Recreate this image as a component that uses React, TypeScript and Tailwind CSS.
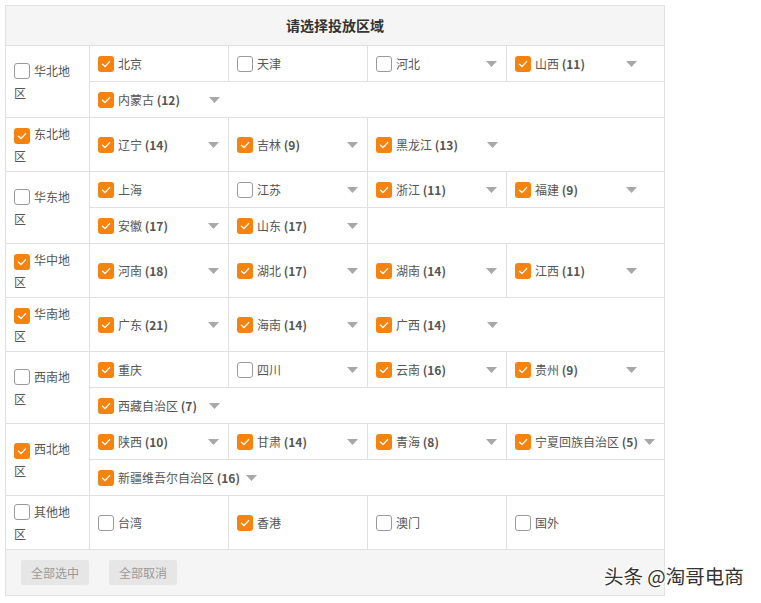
import React from "react";

type Item = { n: string; c?: number; on: boolean; arrow?: boolean; br?: boolean };
type Region = { name: string; on: boolean; rows: Item[][] };

const data: Region[] = [
  {
    name: "华北地区",
    on: false,
    rows: [
      [
        { n: "北京", on: true, br: true },
        { n: "天津", on: false, br: true },
        { n: "河北", on: false, arrow: true, br: true },
        { n: "山西", c: 11, on: true, arrow: true },
      ],
      [{ n: "内蒙古", c: 12, on: true, arrow: true }],
    ],
  },
  {
    name: "东北地区",
    on: true,
    rows: [
      [
        { n: "辽宁", c: 14, on: true, arrow: true, br: true },
        { n: "吉林", c: 9, on: true, arrow: true, br: true },
        { n: "黑龙江", c: 13, on: true, arrow: true },
      ],
    ],
  },
  {
    name: "华东地区",
    on: false,
    rows: [
      [
        { n: "上海", on: true, br: true },
        { n: "江苏", on: false, arrow: true, br: true },
        { n: "浙江", c: 11, on: true, arrow: true, br: true },
        { n: "福建", c: 9, on: true, arrow: true },
      ],
      [
        { n: "安徽", c: 17, on: true, arrow: true, br: true },
        { n: "山东", c: 17, on: true, arrow: true, br: true },
      ],
    ],
  },
  {
    name: "华中地区",
    on: true,
    rows: [
      [
        { n: "河南", c: 18, on: true, arrow: true, br: true },
        { n: "湖北", c: 17, on: true, arrow: true, br: true },
        { n: "湖南", c: 14, on: true, arrow: true, br: true },
        { n: "江西", c: 11, on: true, arrow: true },
      ],
    ],
  },
  {
    name: "华南地区",
    on: true,
    rows: [
      [
        { n: "广东", c: 21, on: true, arrow: true, br: true },
        { n: "海南", c: 14, on: true, arrow: true, br: true },
        { n: "广西", c: 14, on: true, arrow: true },
      ],
    ],
  },
  {
    name: "西南地区",
    on: false,
    rows: [
      [
        { n: "重庆", on: true, br: true },
        { n: "四川", on: false, arrow: true, br: true },
        { n: "云南", c: 16, on: true, arrow: true, br: true },
        { n: "贵州", c: 9, on: true, arrow: true },
      ],
      [{ n: "西藏自治区", c: 7, on: true, arrow: true }],
    ],
  },
  {
    name: "西北地区",
    on: true,
    rows: [
      [
        { n: "陕西", c: 10, on: true, arrow: true, br: true },
        { n: "甘肃", c: 14, on: true, arrow: true, br: true },
        { n: "青海", c: 8, on: true, arrow: true, br: true },
        { n: "宁夏回族自治区", c: 5, on: true, arrow: true },
      ],
      [{ n: "新疆维吾尔自治区", c: 16, on: true, arrow: true }],
    ],
  },
  {
    name: "其他地区",
    on: false,
    rows: [
      [
        { n: "台湾", on: false, br: true },
        { n: "香港", on: true, br: true },
        { n: "澳门", on: false, br: true },
        { n: "国外", on: false },
      ],
    ],
  },
];

function Box({ on }: { on: boolean }) {
  if (on)
    return (
      <span className="inline-flex w-[16px] h-[16px] rounded-[3px] bg-[#f6830f] items-center justify-center shrink-0">
        <svg width="12" height="12" viewBox="0 0 12 12">
          <path d="M2.5 6.2 L5 8.6 L9.6 3.6" fill="none" stroke="#fff" strokeWidth="1.4" strokeLinecap="round" strokeLinejoin="round" />
        </svg>
      </span>
    );
  return <span className="inline-block w-[16px] h-[16px] rounded-[3px] bg-white border border-[#9a9a9a] shrink-0" />;
}

function Arrow() {
  return (
    <svg width="11" height="6" viewBox="0 0 11 6" className="shrink-0">
      <polygon points="0,0 11,0 5.5,6" fill="#a8a8a8" />
    </svg>
  );
}

function Cell({ it }: { it: Item }) {
  return (
    <div
      className={`flex items-center h-full min-w-[139px] pl-[8px] pr-[9px] shrink-0 ${it.br ? "border-r border-[#e0e0e0]" : ""}`}
    >
      <Box on={it.on} />
      <span className="ml-[4px] whitespace-nowrap text-[#555]">
        {it.n}
        {it.c !== undefined && <b className="font-bold text-[#555]"> ({it.c})</b>}
      </span>
      {it.arrow && (
        <span className="ml-auto pl-[6px] flex items-center">
          <Arrow />
        </span>
      )}
    </div>
  );
}

export default function App() {
  return (
    <div
      className="relative bg-white w-[761px] h-[603px] p-[5px] text-[12px]"
      style={{ fontFamily: '"Noto Sans CJK SC", "Noto Sans", sans-serif' }}
    >
      <div className="w-[660px] border border-[#e0e0e0]">
        <div className="h-[40px] bg-[#f5f5f5] border-b border-[#e0e0e0] flex items-center justify-center font-bold text-[14px] text-[#333]">
          请选择投放区域
        </div>
        {data.map((r) => (
          <div
            key={r.name}
            className={`flex border-b border-[#e0e0e0] ${r.rows.length > 1 ? "h-[72px]" : "h-[54px]"}`}
          >
            <div className="w-[84px] shrink-0 border-r border-[#e0e0e0] pl-[8px] pr-[10px] flex items-center">
              <div className="leading-[19px] text-[#555]">
                <span className="inline-block align-[-3px] mr-[4px]">
                  <Box on={r.on} />
                </span>
                {r.name}
              </div>
            </div>
            <div className="flex-1 flex flex-col">
              {r.rows.map((row, i) => (
                <div
                  key={i}
                  className={`flex ${r.rows.length > 1 && i === 0 ? "h-[36px] border-b border-[#e0e0e0]" : "flex-1"}`}
                >
                  {row.map((it) => (
                    <Cell key={it.n} it={it} />
                  ))}
                </div>
              ))}
            </div>
          </div>
        ))}
        <div className="h-[45px] bg-[#f5f5f5] flex items-center pl-[15px] gap-[20px]">
          <div className="h-[25px] px-[10px] bg-[#e6e6e6] rounded-[2px] flex items-center text-[12px] text-[#999]">全部选中</div>
          <div className="h-[25px] px-[10px] bg-[#e6e6e6] rounded-[2px] flex items-center text-[12px] text-[#999]">全部取消</div>
        </div>
      </div>
      <div
        className="absolute left-[604px] top-[561px] text-[19.5px] text-[#333] whitespace-nowrap"
        style={{ textShadow: "0 0 2px #fff, 1px 1px 0 #fff, -1px -1px 0 #fff" }}
      >
        头条 @淘哥电商
      </div>
    </div>
  );
}
